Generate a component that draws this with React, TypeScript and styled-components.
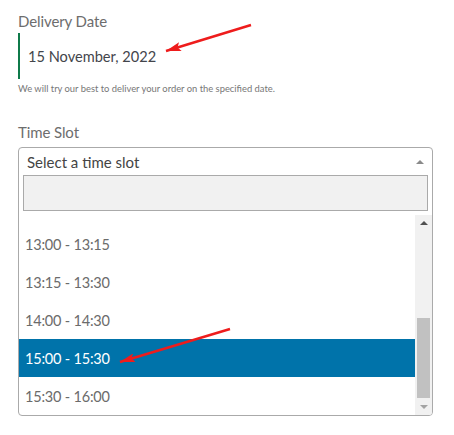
import { useLayoutEffect, useRef } from 'react';
import styled, { createGlobalStyle } from 'styled-components';

const GlobalStyle = createGlobalStyle`
  *, *::before, *::after {
    box-sizing: border-box;
  }
  html, body {
    margin: 0;
    padding: 0;
    background: #fff;
  }
  body {
    font-family: Lato, "Open Sans", sans-serif;
  }
`;

const SLOTS = [
  '10:00 - 10:30',
  '10:30 - 11:00',
  '11:00 - 11:30',
  '11:30 - 12:00',
  '12:00 - 12:30',
  '12:30 - 13:00',
  '13:00 - 13:15',
  '13:15 - 13:30',
  '14:00 - 14:30',
  '15:00 - 15:30',
  '15:30 - 16:00',
];

const SELECTED = '15:00 - 15:30';

export default function App() {
  const listRef = useRef<HTMLUListElement>(null);

  // the dropdown is scrolled all the way down in the screenshot
  useLayoutEffect(() => {
    if (listRef.current) listRef.current.scrollTop = listRef.current.scrollHeight;
  }, []);

  return (
    <>
      <GlobalStyle />
      <Page>
        <Field>
          <Label>Delivery Date</Label>
          <DateValue>15 November, 2022</DateValue>
          <Help>We will try our best to deliver your order on the specified date.</Help>
        </Field>

        <Field $gap={26}>
          <Label>Time Slot</Label>
          <SelectBox>
            <SelectHeader>
              <span>Select a time slot</span>
              <Caret $color="#8a8a8a" />
            </SelectHeader>
            <SearchWrap>
              <SearchInput type="text" aria-label="Search time slots" />
            </SearchWrap>
            <ListArea>
              <Options ref={listRef}>
                {SLOTS.map((slot) => (
                  <Option key={slot} $active={slot === SELECTED}>
                    {slot}
                  </Option>
                ))}
              </Options>
              <ScrollBar>
                <ScrollButton>
                  <Caret $color="#505050" />
                </ScrollButton>
                <ScrollTrack>
                  <ScrollThumb />
                </ScrollTrack>
                <ScrollButton>
                  <Caret $color="#a3a3a3" $down />
                </ScrollButton>
              </ScrollBar>
            </ListArea>
          </SelectBox>
        </Field>

        <Annotations width="454" height="435" viewBox="0 0 454 435">
          <defs>
            <marker id="head" markerWidth="15" markerHeight="9" refX="15" refY="4.5" orient="auto" markerUnits="userSpaceOnUse">
              <path d="M0,0 L15,4.5 L0,9 L3,4.5 Z" fill="#ee1c1c" />
            </marker>
          </defs>
          <line x1="251" y1="25" x2="166" y2="51" stroke="#ee1c1c" strokeWidth="2.5" markerEnd="url(#head)" />
          <line x1="230" y1="329" x2="120" y2="362" stroke="#ee1c1c" strokeWidth="2.5" markerEnd="url(#head)" />
        </Annotations>
      </Page>
    </>
  );
}

const Page = styled.div`
  position: relative;
  width: 454px;
  height: 435px;
  padding: 11px 21px 0 18px;
`;

const Field = styled.div<{ $gap?: number }>`
  display: flex;
  flex-direction: column;
  margin-top: ${({ $gap }) => $gap ?? 0}px;
`;

const Label = styled.label`
  font-size: 15px;
  line-height: 20px;
  letter-spacing: -0.1px;
  color: #6d6d6d;
`;

const DateValue = styled.div`
  margin-top: 2px;
  height: 46px;
  display: flex;
  align-items: center;
  padding-left: 8px;
  border-left: 2px solid #0f7a4a;
  font-size: 14.6px;
  color: #43454b;
`;

const Help = styled.p`
  margin: 3px 0 0;
  font-size: 9.4px;
  line-height: 14px;
  color: #777;
`;

const SelectBox = styled.div`
  margin-top: 5px;
  border: 1px solid #aaa;
  border-radius: 4px;
  overflow: hidden;
  background: #fff;
`;

const SelectHeader = styled.div`
  height: 27px;
  display: flex;
  align-items: center;
  justify-content: space-between;
  padding: 0 8px 0 8px;
  font-size: 15px;
  color: #444;
`;

const Caret = styled.span<{ $color: string; $down?: boolean }>`
  width: 0;
  height: 0;
  border-left: 4px solid transparent;
  border-right: 4px solid transparent;
  ${({ $down, $color }) =>
    $down ? `border-top: 4px solid ${$color};` : `border-bottom: 4px solid ${$color};`}
`;

const SearchWrap = styled.div`
  padding: 0 4px 4px;
`;

const SearchInput = styled.input`
  display: block;
  width: 100%;
  height: 36px;
  border: 1px solid #aaa;
  background: #f1f1f1;
  outline: none;
  font: inherit;
`;

const ListArea = styled.div`
  display: flex;
  height: 200px;
`;

const Options = styled.ul`
  flex: 1;
  margin: 0;
  padding: 0;
  list-style: none;
  overflow: hidden;
`;

const Option = styled.li<{ $active?: boolean }>`
  height: 38px;
  display: flex;
  align-items: center;
  padding-left: 6px;
  font-size: 14.5px;
  letter-spacing: -0.2px;
  color: ${({ $active }) => ($active ? '#fff' : '#6b6b6b')};
  background: ${({ $active }) => ($active ? '#0073aa' : 'transparent')};
`;

const ScrollBar = styled.div`
  width: 17px;
  display: flex;
  flex-direction: column;
  background: #f1f1f1;
`;

const ScrollButton = styled.div`
  height: 16px;
  display: flex;
  align-items: center;
  justify-content: center;
`;

const ScrollTrack = styled.div`
  flex: 1;
  display: flex;
  flex-direction: column;
  justify-content: flex-end;
  padding: 0 2px 1px;
`;

const ScrollThumb = styled.div`
  height: 80px;
  background: #c1c1c1;
`;

const Annotations = styled.svg`
  position: absolute;
  inset: 0;
  pointer-events: none;
`;
